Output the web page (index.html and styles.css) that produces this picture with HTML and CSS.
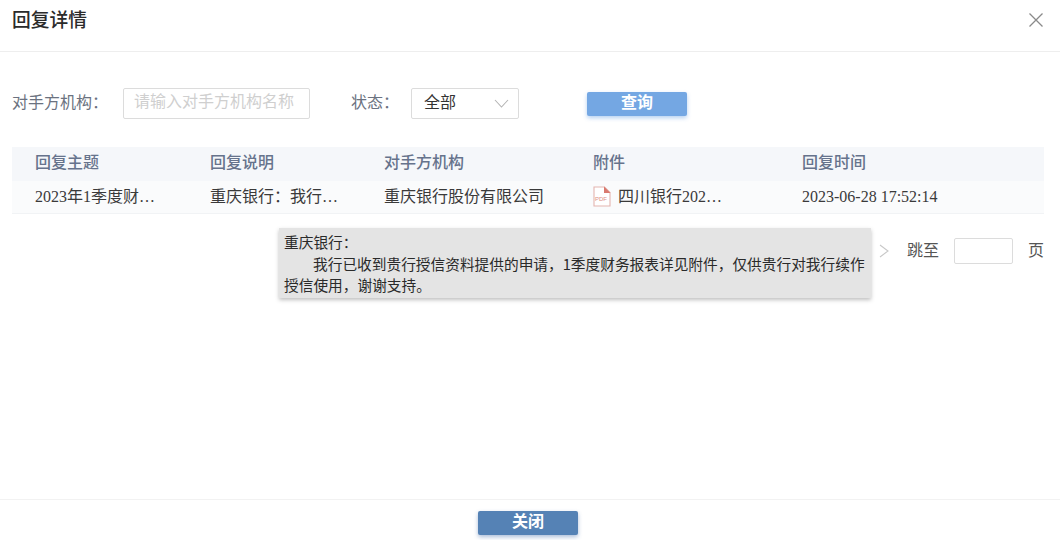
FILE: index.html
```html
<!DOCTYPE html>
<html lang="zh-CN">
<head>
<meta charset="UTF-8">
<meta name="viewport" content="width=device-width, initial-scale=1.0">
<title>回复详情</title>
<link rel="stylesheet" href="styles.css">
</head>
<body>
<div class="dialog">
  <div class="dialog-header">
    <span class="dialog-title">回复详情</span>
    <svg class="close-icon" width="16" height="16" viewBox="0 0 16 16"><path d="M1.5 1.5L14.5 14.5M14.5 1.5L1.5 14.5" stroke="#8a8a8a" stroke-width="1.3" fill="none"/></svg>
  </div>

  <div class="toolbar">
    <span class="field-label">对手方机构&#xFF1A;</span>
    <div class="text-input">请输入对手方机构名称</div>
    <span class="field-label status-label">状态&#xFF1A;</span>
    <div class="select-box">
      <span class="select-value">全部</span>
      <svg width="15" height="9" viewBox="0 0 15 9"><path d="M1 1L7.5 8L14 1" stroke="#b4b4b4" stroke-width="1.1" fill="none"/></svg>
    </div>
    <button class="btn btn-query">查询</button>
  </div>

  <div class="table">
    <div class="table-row table-head">
      <div>回复主题</div>
      <div>回复说明</div>
      <div>对手方机构</div>
      <div>附件</div>
      <div>回复时间</div>
    </div>
    <div class="table-row table-body">
      <div>2023年1季度财…</div>
      <div>重庆银行&#xFF1A;我行…</div>
      <div>重庆银行股份有限公司</div>
      <div class="attachment">
        <svg width="18" height="21" viewBox="0 0 18 21">
          <path d="M1 1H11.5L17 6.5V20H1Z" fill="#fff" stroke="#e3b5b0" stroke-width="1.1"/>
          <path d="M11 0.5L17.5 7H11Z" fill="#d9796f"/>
        </svg>
        <span class="pdf-mark">PDF</span>
        <span>四川银行202…</span>
      </div>
      <div>2023-06-28 17:52:14</div>
    </div>
  </div>

  <div class="pager">
    <svg width="10" height="14" viewBox="0 0 10 14"><path d="M1 1L9 7L1 13" stroke="#c8c8c8" stroke-width="1.1" fill="none"/></svg>
    <span class="pager-jump">跳至</span>
    <div class="pager-input"></div>
    <span>页</span>
  </div>

  <div class="tooltip">
    <div>重庆银行&#xFF1A;</div>
    <div class="tooltip-text">我行已收到贵行授信资料提供的申请&#xFF0C;1季度财务报表详见附件&#xFF0C;仅供贵行对我行续作授信使用&#xFF0C;谢谢支持&#x3002;</div>
  </div>

  <div class="dialog-footer">
    <button class="btn btn-close">关闭</button>
  </div>
</div>
</body>
</html>
```

FILE: styles.css
```css
body, html {
  height: 100%;
  margin: 0;
  background-color: #fff;
}

.dialog {
  position: relative;
  height: 540px;
  display: flex;
  flex-direction: column;
  overflow: hidden;
  font-family: "Liberation Serif", "Noto Sans CJK SC", sans-serif;
  font-size: 16px;
  color: #333;
}

.dialog-header {
  height: 51px;
  flex: none;
  display: flex;
  justify-content: space-between;
  align-items: flex-start;
  padding: 0 16px 0 12px;
  border-bottom: 1px solid #eeeeee;
}

.dialog-title {
  font-family: "Noto Sans CJK SC", sans-serif;
  font-size: 18.75px;
  font-weight: 500;
  line-height: 38px;
  color: #2b2b2b;
}

.close-icon {
  margin-top: 12px;
}

.toolbar {
  display: flex;
  align-items: center;
  height: 31px;
  margin-top: 36px;
  padding-left: 12px;
  font-family: "Noto Sans CJK SC", sans-serif;
  line-height: 20px;
}

.field-label {
  width: 111px;
  flex: none;
  padding-bottom: 5px;
  color: #6b7280;
}

.status-label {
  width: 60px;
  margin-left: 41px;
}

.text-input {
  height: 29px;
  flex: none;
  padding-left: 10px;
  width: 175px;
  line-height: 23px;
  border: 1px solid #dcdcdc;
  border-radius: 2px;
  color: #cfcfcf;
  white-space: nowrap;
  overflow: hidden;
}

.select-box {
  width: 108px;
  height: 31px;
  flex: none;
  display: flex;
  justify-content: space-between;
  align-items: center;
  padding: 0 9px 0 12px;
  box-sizing: border-box;
  border: 1px solid #dcdcdc;
  border-radius: 2px;
  color: #333;
}

.select-value {
  padding-bottom: 5px;
}

.btn {
  width: 100px;
  height: 24px;
  padding: 0 0 6px;
  border: none;
  border-radius: 2px;
  font-family: "Noto Sans CJK SC", sans-serif;
  font-size: 16px;
  font-weight: 700;
  line-height: 18px;
  color: #fff;
}

.btn-query {
  margin-left: 68px;
  background-color: #74a7e3;
  box-shadow: 0 2px 4px rgba(90, 150, 225, 0.45);
}

.table {
  margin: 28px 16px 0 12px;
}

.table-row {
  display: grid;
  grid-template-columns: 175px 174px 209px 209px 1fr;
  align-items: center;
  line-height: 20px;
}

.table-row > div {
  padding-left: 23px;
  white-space: nowrap;
}

.table-head {
  height: 34px;
  padding-bottom: 6px;
  box-sizing: border-box;
  background-color: #f5f7fa;
  font-family: "Noto Sans CJK SC", sans-serif;
  font-weight: 500;
  color: #66738c;
}

.table-body {
  height: 33px;
  padding-bottom: 1px;
  background-color: #fafbfc;
  border-bottom: 1px solid #f1f3f5;
  box-sizing: border-box;
  color: #3a3a3a;
}

.attachment {
  position: relative;
  display: flex;
  align-items: center;
  gap: 7px;
}

.pdf-mark {
  position: absolute;
  left: 25px;
  top: 9px;
  font-family: "Liberation Sans", sans-serif;
  font-size: 6px;
  line-height: 8px;
  color: #dd8d85;
}

.pager {
  display: flex;
  align-items: center;
  justify-content: flex-end;
  height: 26px;
  margin-top: 24px;
  padding-right: 16px;
  font-family: "Noto Sans CJK SC", sans-serif;
  line-height: 20px;
  color: #555;
}

.pager span {
  padding-bottom: 5px;
}

.pager-jump {
  margin-left: 18px;
}

.pager-input {
  width: 57px;
  height: 24px;
  margin: 0 15px;
  border: 1px solid #dcdcdc;
  border-radius: 2px;
}

.tooltip {
  position: absolute;
  left: 279px;
  top: 228px;
  width: 592px;
  height: 70px;
  padding: 3px 4px 0 5px;
  box-sizing: border-box;
  background-color: #e4e4e4;
  box-shadow: 0 2px 4px rgba(0, 0, 0, 0.25);
  font-family: "Noto Sans CJK SC", sans-serif;
  font-size: 14.7px;
  line-height: 21.5px;
  color: #2a2a2a;
}

.tooltip-text {
  text-indent: 29px;
}

.dialog-footer {
  margin-top: auto;
  height: 41px;
  padding: 11px 4px 0 0;
  box-sizing: border-box;
  display: flex;
  justify-content: center;
  border-top: 1px solid #f2f2f2;
}

.btn-close {
  background-color: #5582b5;
  box-shadow: 0 2px 4px rgba(70, 110, 170, 0.45);
}
```
